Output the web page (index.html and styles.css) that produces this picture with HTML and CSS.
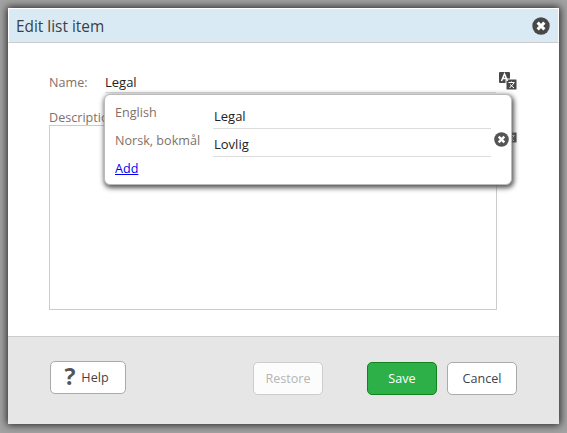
FILE: index.html
```html
<!DOCTYPE html>
<html lang="en">
<head>
    <meta charset="UTF-8">
    <title>Edit list item</title>
    <link rel="stylesheet" href="styles.css">
</head>
<body>
    <div class="dialog">
        <header class="dialog-header">
            <h1>Edit list item</h1>
            <svg class="close-icon" width="18" height="18" viewBox="0 0 18 18">
                <circle cx="9" cy="9" r="8.700" fill="#484848"/>
                <path d="M5.600 5.600l6.800 6.800M12.400 5.600l-6.800 6.800" stroke="#fff" stroke-width="3"/>
            </svg>
        </header>

        <div class="dialog-body">
            <div class="name-row">
                <label class="field-label">Name:</label>
                <div class="name-value">Legal</div>
                <svg class="translate-icon" width="18" height="18" viewBox="0 0 18 18">
                    <rect x="0" y="0" width="11" height="11" rx="1" fill="#484848"/>
                    <rect x="7" y="7" width="11" height="11" rx="1" fill="#484848" stroke="#fff" stroke-width="1"/>
                    <path d="M2.500 9l3-7 3 7M3.800 6.500h3.400" fill="none" stroke="#fff" stroke-width="1.500"/>
                    <path d="M9.500 10.500h6M12.500 9.500v1.500M10.500 16l4.500-5M11 12.500l4 3.500" fill="none" stroke="#fff" stroke-width="1"/>
                </svg>
            </div>

            <label class="field-label description-label">Description:</label>
            <div class="description-row">
                <div class="description-box"></div>
                <svg class="translate-icon" width="18" height="18" viewBox="0 0 18 18">
                    <rect x="0" y="0" width="11" height="11" rx="1" fill="#484848"/>
                    <rect x="7" y="7" width="11" height="11" rx="1" fill="#484848" stroke="#fff" stroke-width="1"/>
                    <path d="M9.500 10.500h6M12.500 9.500v1.500M10.500 16l4.500-5M11 12.500l4 3.500" fill="none" stroke="#fff" stroke-width="1"/>
                </svg>
            </div>

            <div class="translations">
                <div class="translation-row">
                    <span class="language">English</span>
                    <div class="translation-value">Legal</div>
                </div>
                <div class="translation-row">
                    <span class="language">Norsk, bokmål</span>
                    <div class="translation-value">Lovlig</div>
                    <svg class="remove-icon" width="15" height="15" viewBox="0 0 15 15">
                        <circle cx="7.500" cy="7.500" r="7.300" fill="#555"/>
                        <path d="M4.700 4.700l5.600 5.600M10.300 4.700l-5.600 5.600" stroke="#fff" stroke-width="2.400"/>
                    </svg>
                </div>
                <a class="add-link" href="#">Add</a>
            </div>
        </div>

        <footer class="dialog-footer">
            <button class="btn help-btn"><span class="help-mark">?</span>Help</button>
            <div class="footer-actions">
                <button class="btn restore-btn">Restore</button>
                <button class="btn save-btn">Save</button>
                <button class="btn cancel-btn">Cancel</button>
            </div>
        </footer>
    </div>
</body>
</html>
```
FILE: styles.css
```css
/* Page */
body {
    margin: 0;
    height: 433px;
    overflow: hidden;
    padding: 8px 8px 9px 8px;
    box-sizing: border-box;
    background-color: #a3a3a3;
    font-family: "Open Sans", sans-serif;
    font-size: 12.6px;
}

/* Dialog */
.dialog {
    position: relative;
    width: 551px;
    height: 416px;
    display: flex;
    flex-direction: column;
    background: #fff;
    box-shadow: 0 0 8px 1px #222;
}

.dialog-header {
    height: 33px;
    padding: 0 7px;
    border: 1px solid #fff;
    border-bottom: 1px solid #ccc;
    display: flex;
    align-items: center;
    justify-content: space-between;
    background-color: #d9eaf4;
}

.dialog-header h1 {
    margin: 2px 0 0;
    font-size: 15.4px;
    font-weight: normal;
    color: #3a3f44;
}

.close-icon {
    flex: none;
    margin-right: 1px;
}

/* Form */
.dialog-body {
    flex: 1;
    padding: 31px 41px 0;
}

.name-row {
    display: flex;
    align-items: flex-start;
}

.field-label {
    color: #80706a;
}

.name-row .field-label {
    width: 56px;
    line-height: 18px;
}

.name-value {
    width: 391px;
    height: 18px;
    line-height: 16px;
    font-size: 13px;
    border-bottom: 1px solid #ddd;
    color: #222;
}

.translate-icon {
    flex: none;
    margin-left: 3px;
    margin-top: -2px;
}

.description-label {
    display: block;
    margin-top: 16px;
    height: 16px;
    line-height: 18px;
}

.description-row {
    display: flex;
}

.description-box {
    width: 448px;
    height: 185px;
    border: 1px solid #ccc;
    box-sizing: border-box;
}

.description-row .translate-icon {
    margin-left: 2px;
    margin-top: 0;
}

/* Translations popover */
.translations {
    position: absolute;
    left: 96px;
    top: 86px;
    width: 408px;
    height: 91px;
    box-sizing: border-box;
    padding: 9px 10px 0;
    background: #fff;
    border: 1px solid #bbb;
    border-radius: 6px;
    box-shadow: 1px 2px 5px 1px #555;
}

.translation-row {
    display: flex;
    align-items: flex-start;
    height: 28px;
}

.language {
    flex: none;
    width: 98px;
    line-height: 18px;
    color: #80706a;
}

.translation-value {
    flex: none;
    width: 277px;
    height: 24px;
    padding-left: 1px;
    line-height: 24px;
    font-size: 13px;
    border-bottom: 1px solid #ddd;
    color: #222;
}

.remove-icon {
    flex: none;
    margin-left: 3px;
}

.add-link {
    color: #0000ee;
}

/* Footer */
.dialog-footer {
    height: 88px;
    padding: 24px 42px 0;
    box-sizing: border-box;
    border-top: 1px solid #ccc;
    background-color: #e6e6e6;
    display: flex;
    justify-content: space-between;
    align-items: flex-start;
}

.footer-actions {
    display: flex;
    margin-top: 1px;
}

.btn {
    height: 33px;
    padding: 0;
    font-family: inherit;
    font-size: 12.6px;
    background: #fff;
    color: #444;
    border: 1px solid #aaa;
    border-radius: 5px;
}

.help-btn {
    width: 76px;
    padding-right: 3px;
    display: flex;
    align-items: center;
    justify-content: center;
}

.help-mark {
    font-size: 23px;
    line-height: 24px;
    margin-top: -4px;
    font-weight: bold;
    color: #555;
    margin-right: 6px;
}

.restore-btn {
    width: 70px;
    margin-right: 44px;
    color: #b5b5b5;
    background: #fcfcfc;
    border-color: #ccc;
}

.save-btn {
    width: 70px;
    margin-right: 10px;
    color: #fff;
    background: #2eb049;
    border-color: #13831f;
}

.cancel-btn {
    width: 70px;
}
```
